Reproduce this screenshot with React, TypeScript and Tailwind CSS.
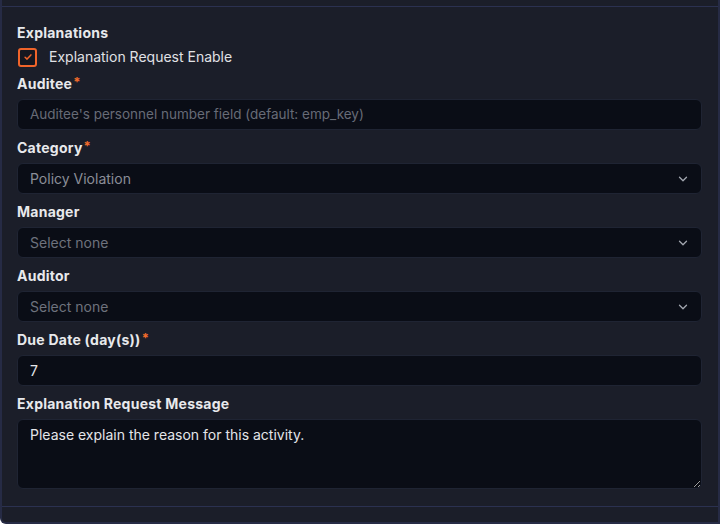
import { ChevronDown } from "lucide-react";

const FONT = { fontFamily: "Inter, 'Noto Sans', sans-serif" };

const Label = ({ text, required }: { text: string; required?: boolean }) => (
  <div className="mb-[5px] flex h-5 items-center text-sm font-bold leading-5 tracking-[0.25px] text-[#e8e9ec]">
    {text}
    {required && <span className="ml-px -mt-1 text-[13px] text-[#f26b2b]">*</span>}
  </div>
);

const fieldBox =
  "flex h-[31px] w-full items-center rounded-md border border-[#1f2433] bg-[#0a0d16] pl-3 text-sm";

const Select = ({ value, muted }: { value: string; muted?: boolean }) => (
  <div className={`${fieldBox} justify-between pr-[11px]`}>
    <span className={muted ? "text-[#6e727d]" : "text-[#8a8e98]"}>{value}</span>
    <ChevronDown className="h-3.5 w-3.5 text-[#a3a7b0]" strokeWidth={2.2} />
  </div>
);

export default function App() {
  return (
    <div
      className="flex h-[524px] w-[720px] flex-col rounded-bl-md border-b-2 border-l-2 border-r-2 border-[#262b45] bg-[#1b1e29]"
      style={FONT}
    >
      <div className="h-[7px] shrink-0 border-b border-[#2b3150]" />

      <div className="flex flex-1 flex-col pl-[15px] pr-4 pt-4">
        <div className="h-5 text-sm font-bold leading-5 tracking-[0.25px] text-[#e8e9ec]">Explanations</div>

        <label className="mt-1 flex h-5 items-center gap-3">
          <span className="ml-px flex h-[19px] w-[19px] items-center justify-center rounded-[3px] border-2 border-[#f0642a] bg-[#141720]">
            <svg viewBox="0 0 12 12" className="h-[10px] w-[10px]" fill="none">
              <path d="M2.5 6.3 L4.9 8.5 L9.5 3.5" stroke="#f0642a" strokeWidth="1.8" strokeLinecap="round" strokeLinejoin="round" />
            </svg>
          </span>
          <span className="text-sm text-[#e0e1e5]">Explanation Request Enable</span>
        </label>

        <div className="mt-[7px] flex flex-col gap-2">
          <div>
            <Label text="Auditee" required />
            <div className={fieldBox}>
              <span className="text-[13.5px] text-[#676b76]">Auditee's personnel number field (default: emp_key)</span>
            </div>
          </div>

          <div>
            <Label text="Category" required />
            <Select value="Policy Violation" />
          </div>

          <div>
            <Label text="Manager" />
            <Select value="Select none" muted />
          </div>

          <div>
            <Label text="Auditor" />
            <Select value="Select none" muted />
          </div>

          <div>
            <Label text="Due Date (day(s))" required />
            <div className={fieldBox}>
              <span className="text-[#e4e5e9]">7</span>
            </div>
          </div>

          <div>
            <Label text="Explanation Request Message" />
            <textarea
              className="block h-[70px] w-full rounded-md border border-[#1f2433] bg-[#0a0d16] px-3 py-[5px] text-sm leading-5 text-[#e4e5e9] outline-none"
              defaultValue="Please explain the reason for this activity."
            />
          </div>
        </div>
      </div>

      <div className="h-[16px] shrink-0 border-t border-[#2b3150]" />
    </div>
  );
}
